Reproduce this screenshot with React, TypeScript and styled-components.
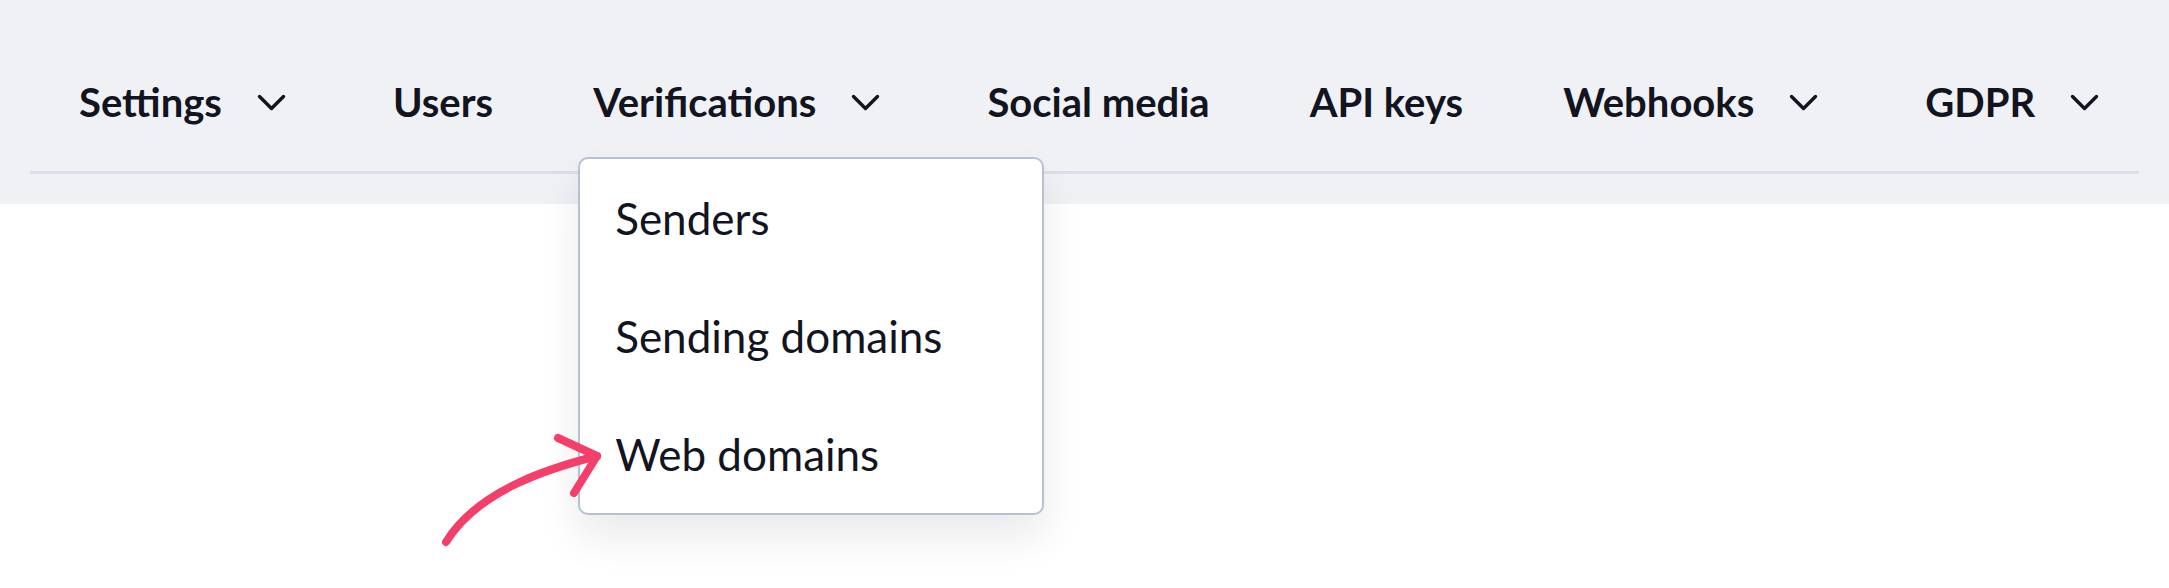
import React from "react";
import styled, { createGlobalStyle } from "styled-components";

const GlobalStyle = createGlobalStyle`
  html, body {
    margin: 0;
    padding: 0;
    background: #ffffff;
  }
  body {
    font-family: Lato, "Noto Sans", "Liberation Sans", sans-serif;
    color: #12141f;
    -webkit-font-smoothing: antialiased;
  }
`;

const Page = styled.div`
  min-height: 588px;
  background: #ffffff;
`;

const Header = styled.header`
  background: #f0f1f5;
  padding: 0 30px 30px;
`;

const Nav = styled.nav`
  display: flex;
  align-items: center;
  gap: 100px;
  padding: 78px 0 45px 49px;
  border-bottom: 3px solid #dcdde8;
`;

const NavItem = styled.div`
  position: relative;
  display: flex;
  align-items: center;
  font-size: 40px;
  line-height: 48px;
  font-weight: 700;
  color: #12141f;
  white-space: nowrap;
  cursor: pointer;
`;

const ChevronIcon = styled.svg`
  width: 29px;
  height: 17px;
  margin-left: 35px;
  margin-right: 7px;
  flex: none;
`;

const Dropdown = styled.div`
  position: absolute;
  top: calc(100% + 31px);
  left: -15px;
  width: 466px;
  box-sizing: border-box;
  background: #ffffff;
  border: 2px solid #b8c0d4;
  border-radius: 10px;
  box-shadow: 0 22px 40px rgba(20, 24, 40, 0.09);
  z-index: 10;
`;

const MenuItem = styled.div`
  height: 118px;
  line-height: 118px;
  padding-left: 35px;
  font-size: 44px;
  font-weight: 400;
  color: #12141f;
`;

const Pointer = styled.svg`
  position: absolute;
  left: -140px;
  top: 271px;
  width: 170px;
  height: 120px;
  overflow: visible;
  z-index: 11;
`;

const Chevron = () => (
  <ChevronIcon viewBox="0 0 29 17" fill="none">
    <path
      d="M2.5 2.5 L14.5 14.5 L26.5 2.5"
      stroke="#12141f"
      strokeWidth="3.4"
      strokeLinecap="round"
      strokeLinejoin="round"
    />
  </ChevronIcon>
);

const HandArrow = () => (
  <Pointer viewBox="0 0 170 120" fill="none">
    <g stroke="#f43f6b" strokeWidth="8" strokeLinecap="round" strokeLinejoin="round">
      <path d="M157 26 C 110 38, 38 60, 6 112" />
      <path d="M118 8 L157 26 L134 63" />
    </g>
  </Pointer>
);

type Item = { label: string; menu?: boolean; open?: boolean };

const items: Item[] = [
  { label: "Settings", menu: true },
  { label: "Users" },
  { label: "Verifications", menu: true, open: true },
  { label: "Social media" },
  { label: "API keys" },
  { label: "Webhooks", menu: true },
  { label: "GDPR", menu: true },
];

const verificationLinks = ["Senders", "Sending domains", "Web domains"];

export default function App() {
  return (
    <Page>
      <GlobalStyle />
      <Header>
        <Nav>
          {items.map((item) => (
            <NavItem key={item.label}>
              {item.label}
              {item.menu && <Chevron />}
              {item.open && (
                <Dropdown>
                  {verificationLinks.map((link) => (
                    <MenuItem key={link}>{link}</MenuItem>
                  ))}
                  <HandArrow />
                </Dropdown>
              )}
            </NavItem>
          ))}
        </Nav>
      </Header>
    </Page>
  );
}
